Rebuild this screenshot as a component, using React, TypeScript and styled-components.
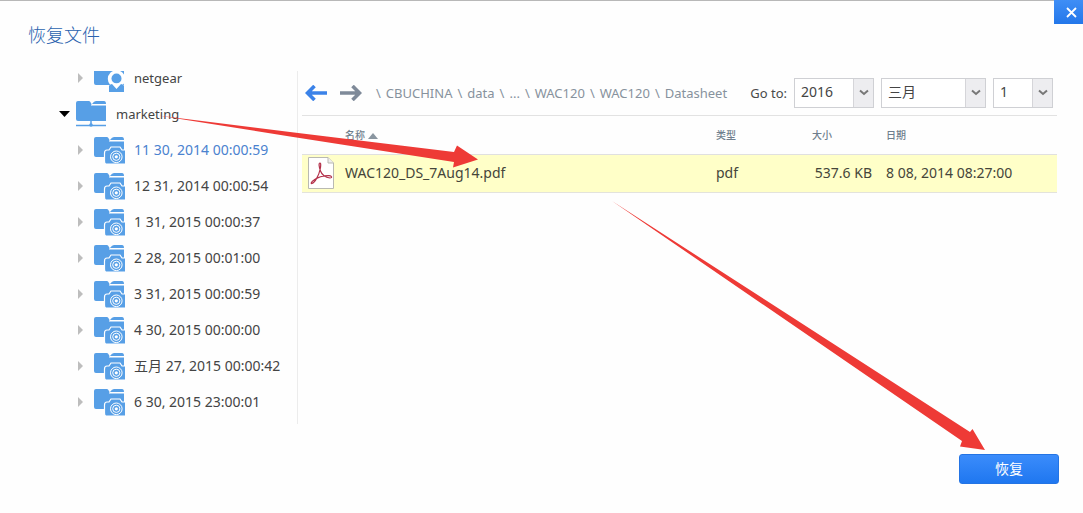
import React from "react";
import styled, { createGlobalStyle } from "styled-components";

const GlobalStyle = createGlobalStyle`
  * { box-sizing: border-box; }
  body {
    margin: 0;
    background: #fefefe;
    color: #4a4a4a;
    font: 14px/20px "Noto Sans", "Noto Sans CJK SC", sans-serif;
  }
`;

const Dialog = styled.main`
  position: relative;
  min-height: 100vh;
  display: flex;
  flex-direction: column;
  padding: 24px 24px 29px 28px;
  border-top: 1px solid #b8b8b8;
`;

const CloseButton = styled.button`
  position: absolute;
  top: -1px;
  right: 0;
  width: 29px;
  height: 24px;
  padding: 0 0 0 6px;
  border: 0;
  background: linear-gradient(#3f8ef6, #2377ea);
  display: flex;
  align-items: center;
  justify-content: center;
`;

const Title = styled.h1`
  margin: 0 0 26px;
  font-size: 18px;
  line-height: 20px;
  font-weight: 300;
  color: #2a62ae;
`;

const Body = styled.div`
  display: flex;
  flex: 1;
`;

const TreePane = styled.nav`
  flex: 0 0 270px;
  height: 353px;
  overflow: hidden;
  border-right: 1px solid #ececec;
`;

const Tree = styled.ul`
  margin: -11px 0 0;
  padding: 0 0 0 31px;
  list-style: none;
`;

const TreeRow = styled.li<{ $depth: number }>`
  display: flex;
  align-items: center;
  height: 36px;
  padding-left: ${(p) => p.$depth * 18}px;
`;

const Toggle = styled.button`
  width: 17px;
  height: 20px;
  padding: 0;
  border: 0;
  background: none;
  display: flex;
  align-items: center;
`;

const TreeLink = styled.a<{ $active?: boolean; $small?: boolean }>`
  display: flex;
  align-items: center;
  gap: 9px;
  white-space: nowrap;
  text-decoration: none;
  line-height: 14px;
  font-size: ${(p) => (p.$small ? 13 : 14)}px;
  color: ${(p) => (p.$active ? "#4a82cf" : "#444")};
`;

const Content = styled.section`
  flex: 1;
  min-width: 0;
  padding: 7px 2px 0 4px;
`;

const Toolbar = styled.div`
  display: flex;
  align-items: center;
  height: 38px;
  padding: 0 4px 8px 3px;
  border-bottom: 1px solid #e2e2e2;
`;

const NavButton = styled.button`
  display: flex;
  align-items: center;
  width: 22px;
  height: 20px;
  margin-right: 13px;
  padding: 0;
  border: 0;
  background: none;
`;

const Crumbs = styled.ol`
  display: flex;
  flex: 1;
  margin: 0;
  padding: 0;
  list-style: none;
  font-size: 13px;
  color: #87929d;
`;

const Crumb = styled.li`
  white-space: pre;
  &::before { content: "\\\\"; margin: 0 5px; }
  &:first-child::before { margin-left: 1px; }
  a { color: inherit; text-decoration: none; }
`;

const Pickers = styled.div`
  display: flex;
  align-items: center;
  gap: 7px;
  font-size: 13px;
`;

const Picker = styled.label<{ $width: number }>`
  display: grid;
  grid-template-columns: 1fr 20px;
  width: ${(p) => p.$width}px;
  height: 30px;
  border: 1px solid #cfd0d4;
  background: #fff;
  select {
    grid-area: 1 / 1 / 2 / 3;
    appearance: none;
    border: 0;
    padding: 0 20px 1px 6px;
    background: none;
    color: #444;
    font: inherit;
    font-size: 14px;
  }
`;

const PickerArrow = styled.span`
  grid-area: 1 / 2 / 2 / 3;
  display: flex;
  align-items: center;
  justify-content: center;
  border-left: 1px solid #d5d5d9;
  background: #ededf0;
  pointer-events: none;
`;

const Files = styled.table`
  width: 100%;
  table-layout: fixed;
  border-collapse: collapse;
  white-space: nowrap;
  th, td { padding: 0; text-align: left; }
  th {
    height: 38px;
    font-size: 10px;
    font-weight: 500;
    color: #6f7e8d;
    border-bottom: 1px solid #e0e0e0;
  }
  td {
    height: 38px;
    background: #ffffc8;
    color: #45453a;
    border-bottom: 1px solid #e3e3dc;
  }
  .size { text-align: right; }
  .date { padding-left: 14px; }
  .icon { padding-left: 6px; }
  svg { vertical-align: middle; }
  th svg { vertical-align: baseline; }
`;

const Footer = styled.footer`
  display: flex;
  justify-content: flex-end;
  margin-top: 30px;
`;

const RestoreButton = styled.button`
  width: 100px;
  height: 30px;
  padding: 0;
  border: 1px solid #2474e4;
  border-radius: 3px;
  background: linear-gradient(#3b8cfb, #1f77f0);
  color: #fff;
  font: inherit;
`;

const Annotations = styled.svg`
  position: absolute;
  top: -1px;
  left: 0;
  pointer-events: none;
`;

function FolderShape() {
  return (
    <>
      <path d="M0 2Q0 0 2 0H13Q14 0 15 2L16 4H30V20H2Q0 20 0 18Z" fill="#579fe6" />
      <path d="M16 3Q18 0 20 0H28Q30 0 30 3Z" fill="#579fe6" />
      <path d="M15 4H30" stroke="#fff" />
    </>
  );
}

function SnapshotIcon() {
  return (
    <svg width="31" height="27" viewBox="0 0 31 27" aria-hidden="true">
      <FolderShape />
      <path
        d="M13 13H15L17 10H26L28 13H32V27H12Q10.500 27 10.500 24V16Q10.500 13 13 13Z"
        fill="#579fe6"
        stroke="#fff"
        strokeWidth="1.2"
      />
      <g fill="none" stroke="#fff">
        <circle cx="22.3" cy="19.8" r="5.8" />
        <circle cx="22.3" cy="19.8" r="3.6" />
      </g>
      <circle cx="22.3" cy="19.8" r="1.6" fill="#fff" />
    </svg>
  );
}

function UserFolderIcon() {
  return (
    <svg width="31" height="27" viewBox="0 0 31 27" aria-hidden="true">
      <path d="M0 2Q0 0 2 0H13L16 4H30V20H2Q0 20 0 18Z" fill="#579fe6" />
      <path d="M16 4.500H30" stroke="#fff" strokeWidth=".8" />
      <circle cx="22.500" cy="14" r="8.7" fill="#fff" />
      <path d="M15 27V21Q15 19.500 18 19L22.500 24L27 19Q30 19.500 30 21V27Z" fill="#579fe6" />
      <circle cx="22.500" cy="13.500" r="5" fill="#579fe6" />
      <path d="M19.500 18.500L22.500 23L25.500 18.500Z" fill="#fff" />
    </svg>
  );
}

function ShareIcon() {
  return (
    <svg width="31" height="26" viewBox="0 0 31 26" aria-hidden="true">
      <FolderShape />
      <path d="M15 20V25M0 24.500H30" stroke="#579fe6" strokeWidth="1.5" />
      <circle cx="15" cy="24" r="1.8" fill="#579fe6" />
    </svg>
  );
}

function Arrow({ color, back }: { color: string; back?: boolean }) {
  return (
    <svg width="22" height="16" viewBox="0 0 22 16" aria-hidden="true">
      <path
        d={back ? "M22 8H3M9.500 1L2.500 8L9.500 15" : "M0 8H19M12.500 1L19.500 8L12.500 15"}
        fill="none"
        stroke={color}
        strokeWidth="3.6"
      />
    </svg>
  );
}

function PdfIcon() {
  return (
    <svg width="27" height="32" viewBox="0 0 27 32" aria-hidden="true">
      <path d="M.5.5H20L25.500 6V31.500H.5Z" fill="#fff" stroke="#b9b9b2" />
      <path d="M20 .5V6H25.500" fill="#eee" stroke="#b9b9b2" />
      <path
        d="M12 6C10.500 6 11 10 12.500 14C14 18 18 20.500 22 21C24.500 21 24 18.800 21 18.600C16 18.500 10 20 6 23C3 25 2.500 27 4 26.500C7 25.500 11 18 12.200 12C12.800 9 13 6 12 6Z"
        fill="none"
        stroke="#b3304a"
        strokeWidth="1.2"
      />
    </svg>
  );
}

function Select({ label, width, value }: { label: string; width: number; value: string }) {
  return (
    <Picker $width={width}>
      <select aria-label={label} defaultValue={value}>
        <option>{value}</option>
      </select>
      <PickerArrow>
        <svg width="10" height="7" viewBox="0 0 10 7" aria-hidden="true">
          <path d="M1 1.500L5 5L9 1.500" fill="none" stroke="#777" strokeWidth="2" />
        </svg>
      </PickerArrow>
    </Picker>
  );
}

const snapshots = [
  "11 30, 2014 00:00:59",
  "12 31, 2014 00:00:54",
  "1 31, 2015 00:00:37",
  "2 28, 2015 00:01:00",
  "3 31, 2015 00:00:59",
  "4 30, 2015 00:00:00",
  "五月 27, 2015 00:00:42",
  "6 30, 2015 23:00:01",
];

const path = ["CBUCHINA", "data", "...", "WAC120", "WAC120", "Datasheet"];

function ClosedToggle() {
  return (
    <Toggle aria-label="展开">
      <svg width="7" height="10" viewBox="0 0 7 10" aria-hidden="true">
        <path d="M1 0L6 5L1 10Z" fill="#bdbdbd" />
      </svg>
    </Toggle>
  );
}

export default function App() {
  return (
    <Dialog>
      <GlobalStyle />
      <Title>恢复文件</Title>
      <CloseButton aria-label="关闭">
        <svg width="11" height="11" viewBox="0 0 11 11" aria-hidden="true">
          <path d="M1 1L10 10M10 1L1 10" stroke="#fff" strokeWidth="1.8" />
        </svg>
      </CloseButton>
      <Body>
        <TreePane>
          <Tree>
            <TreeRow $depth={1}>
              <ClosedToggle />
              <TreeLink href="#netgear" $small>
                <UserFolderIcon />
                netgear
              </TreeLink>
            </TreeRow>
            <TreeRow $depth={0}>
              <Toggle aria-label="折叠">
                <svg width="11" height="6" viewBox="0 0 11 6" aria-hidden="true">
                  <path d="M0 0H11L5.500 6Z" fill="#000" />
                </svg>
              </Toggle>
              <TreeLink href="#marketing" $small>
                <ShareIcon />
                marketing
              </TreeLink>
            </TreeRow>
            {snapshots.map((name, i) => (
              <TreeRow key={name} $depth={1}>
                <ClosedToggle />
                <TreeLink href={`#snapshot-${i}`} $active={i === 0}>
                  <SnapshotIcon />
                  {name}
                </TreeLink>
              </TreeRow>
            ))}
          </Tree>
        </TreePane>
        <Content>
          <Toolbar>
            <NavButton aria-label="后退">
              <Arrow color="#3b82e8" back />
            </NavButton>
            <NavButton aria-label="前进">
              <Arrow color="#7f8a99" />
            </NavButton>
            <Crumbs>
              {path.map((part, i) => (
                <Crumb key={i}>
                  <a href={`#path-${i}`}>{part}</a>
                </Crumb>
              ))}
            </Crumbs>
            <Pickers>
              <span>Go to:</span>
              <Select label="年" width={80} value="2016" />
              <Select label="月" width={105} value="三月" />
              <Select label="日" width={60} value="1" />
            </Pickers>
          </Toolbar>
          <Files>
            <colgroup>
              <col style={{ width: 43 }} />
              <col />
              <col style={{ width: 96 }} />
              <col style={{ width: 60 }} />
              <col style={{ width: 185 }} />
            </colgroup>
            <thead>
              <tr>
                <th />
                <th>
                  名称{" "}
                  <svg width="10" height="6" viewBox="0 0 10 6" aria-hidden="true">
                    <path d="M0 6L5 0L10 6Z" fill="#8a96a0" />
                  </svg>
                </th>
                <th>类型</th>
                <th>大小</th>
                <th className="date">日期</th>
              </tr>
            </thead>
            <tbody>
              <tr>
                <td className="icon">
                  <PdfIcon />
                </td>
                <td>WAC120_DS_7Aug14.pdf</td>
                <td>pdf</td>
                <td className="size">537.6 KB</td>
                <td className="date">8 08, 2014 08:27:00</td>
              </tr>
            </tbody>
          </Files>
        </Content>
      </Body>
      <Footer>
        <RestoreButton>恢复</RestoreButton>
      </Footer>
      <Annotations width="1000" height="460" viewBox="0 0 1000 460" aria-hidden="true">
        <g fill="#ee3a36">
          <path d="M158 115.500L290 132L454 152L457 145.500L478 159.500L453 167.500L454 162L290 136.500Z" />
          <path d="M612 201L970 432L972.500 429L985 450L960 446.500L962 441Z" />
        </g>
      </Annotations>
    </Dialog>
  );
}
